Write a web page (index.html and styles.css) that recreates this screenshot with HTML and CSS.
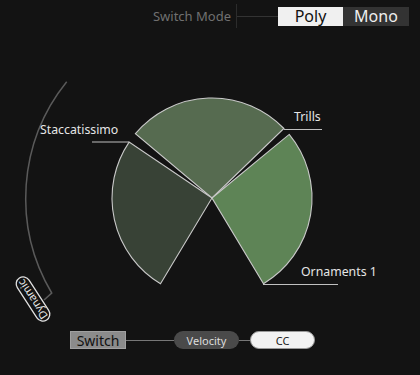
FILE: index.html
```html
<html>

<head>
  <meta charset="UTF-8">
  <meta name="viewport" content="width=device-width, initial-scale=1.0">
  <title>Articulations</title>
  <link rel="stylesheet" href="styles.css">
</head>

<body>
  <header class="mode-bar">
    <span class="mode-label">Switch Mode</span>
    <div class="mode-tick"></div>
    <div class="mode-link"></div>
    <div class="seg seg-on">Poly</div>
    <div class="seg seg-off">Mono</div>
  </header>

  <svg class="wheel" width="420" height="292" viewBox="0 32 420 292">
    <!-- dynamic slider arc -->
    <path class="dyn-arc" d="M66.7,81.7 A186,186 0 0 0 51.7,293 L44,300" />
    <g transform="translate(33,299) rotate(-123)">
      <rect class="dyn-pill" x="-25" y="-7" width="50" height="14" rx="7" />
      <text class="dyn-text" x="0" y="3.5">Dynamic</text>
    </g>

    <!-- articulation sectors -->
    <path class="sector s-top" d="M212,198 L283.9,128.5 A100,100 0 0 0 135.4,133.7 Z" />
    <path class="sector s-left" d="M212,198 L129.1,142.1 A100,100 0 0 0 160.5,283.7 Z" />
    <path class="sector s-right" d="M212,198 L289.2,134.4 A100,100 0 0 1 263.5,283.7 Z" />

    <!-- labels -->
    <line class="leader" x1="92" y1="142" x2="129" y2="142" />
    <text class="label" x="40" y="134">Staccatissimo</text>
    <line class="leader" x1="284" y1="129.5" x2="322" y2="129.5" />
    <text class="label" x="294" y="121">Trills</text>
    <line class="leader" x1="263" y1="284.5" x2="338" y2="284.5" />
    <text class="label" x="301" y="276">Ornaments 1</text>
  </svg>

  <footer class="trigger-bar">
    <div class="switch-box">Switch</div>
    <div class="link link-long"></div>
    <div class="pill pill-dark">Velocity</div>
    <div class="link link-short"></div>
    <div class="pill pill-light">CC</div>
  </footer>
</body>

</html>
```

FILE: styles.css
```css
* {
  margin: 0;
  padding: 0;
  box-sizing: border-box;
}

html,
body {
  width: 420px;
  height: 375px;
  background: #131313;
  overflow: hidden;
  font-family: "Noto Sans", "Open Sans", sans-serif;
}

.mode-bar {
  height: 32px;
  display: flex;
  align-items: center;
  justify-content: flex-end;
  padding: 0 11px 0 0;
}

.mode-label {
  color: #707070;
  font-size: 13px;
  margin-right: 5px;
}

.mode-tick {
  width: 1px;
  height: 24px;
  background: #2c2c2c;
}

.mode-link {
  width: 41px;
  height: 1px;
  background: #333;
}

.seg {
  height: 19px;
  display: flex;
  justify-content: center;
  align-items: center;
  font-size: 16px;
}

.seg-on {
  width: 65px;
  background: #f0f0f0;
  color: #111;
}

.seg-off {
  width: 66px;
  background: #333;
  color: #eee;
}

.wheel {
  display: block;
}

.dyn-arc {
  fill: none;
  stroke: #5a5a5a;
  stroke-width: 1.5;
}

.dyn-pill {
  fill: #131313;
  stroke: #e0e0e0;
  stroke-width: 1.3;
}

.dyn-text {
  fill: #e8e8e8;
  font-size: 11px;
  text-anchor: middle;
}

.sector {
  stroke: #c9c9c9;
  stroke-width: 1.1;
}

.s-top {
  fill: #566b50;
}

.s-left {
  fill: #384236;
}

.s-right {
  fill: #5e8456;
}

.leader {
  stroke: #c0c0c0;
  stroke-width: 1.2;
}

.label {
  fill: #e6e6e6;
  font-size: 12.3px;
}

.trigger-bar {
  display: flex;
  align-items: center;
  padding: 7px 0 0 70px;
}

.switch-box {
  width: 56px;
  height: 18px;
  background: #8b8b8b;
  border: 1px solid #a0a0a0;
  color: #111;
  font-size: 14px;
  display: flex;
  justify-content: center;
  align-items: center;
}

.link {
  height: 1px;
  background: #777;
}

.link-long {
  width: 48px;
}

.link-short {
  width: 11px;
}

.pill {
  width: 65px;
  height: 18px;
  border-radius: 9px;
  font-size: 11px;
  display: flex;
  justify-content: center;
  align-items: center;
}

.pill-dark {
  background: #4a4a4a;
  color: #ddd;
}

.pill-light {
  background: #f2f2f2;
  border: 1px solid #999;
  color: #222;
}
```
